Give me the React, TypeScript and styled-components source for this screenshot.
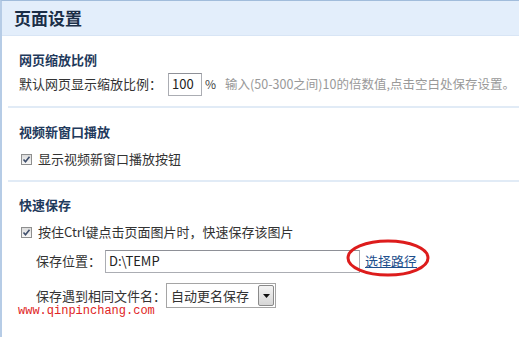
import React from "react";
import styled, { createGlobalStyle } from "styled-components";

const Global = createGlobalStyle`
  html, body { margin: 0; padding: 0; background: #ffffff; }
  body {
    font-family: "Noto Sans CJK SC", "Microsoft YaHei", sans-serif;
    font-size: 13px;
    color: #333333;
  }
`;

const Page = styled.div`
  width: 519px;
  height: 337px;
  box-sizing: border-box;
  border-left: 2px solid #b6cce6;
  border-top: 1px solid #a1bcdb;
  overflow: hidden;
  position: relative;
`;

const Header = styled.div`
  height: 35px;
  box-sizing: border-box;
  background: #e3eefb;
  border-bottom: 1px solid #d8e5f5;
  padding-left: 12px;
  display: flex;
  align-items: center;
`;

const Title = styled.h1`
  margin: 0;
  font-size: 17px;
  font-weight: 700;
  color: #1b2e47;
  line-height: 20px;
`;

const Section = styled.section<{ $top: number; $bottom: number; $last?: boolean }>`
  margin-left: 6px;
  padding: ${(p) => p.$top}px 0 ${(p) => p.$bottom}px 11px;
  border-bottom: ${(p) => (p.$last ? "none" : "2px solid #e1ebf6")};
  display: flex;
  flex-direction: column;
`;

const SectionTitle = styled.h2`
  margin: 0;
  font-size: 13px;
  font-weight: 700;
  color: #1f3a5c;
  line-height: 20px;
`;

const Row = styled.div<{ $gap: number; $indent?: number; $h?: number }>`
  display: flex;
  align-items: center;
  margin-top: ${(p) => p.$gap}px;
  padding-left: ${(p) => p.$indent ?? 0}px;
  height: ${(p) => p.$h ?? 20}px;
  line-height: 20px;
  white-space: nowrap;
  & > * { flex-shrink: 0; }
`;

const Label = styled.span`
  color: #333333;
`;

const TextBox = styled.div<{ $w: number; $ml: number }>`
  width: ${(p) => p.$w}px;
  height: 23px;
  margin-left: ${(p) => p.$ml}px;
  box-sizing: border-box;
  border: 1px solid #abadb3;
  border-top-color: #8e9097;
  background: #fff;
  padding-left: 3px;
  display: flex;
  align-items: center;
  font-size: 13px;
  color: #222;
`;

const Unit = styled.span`
  margin-left: 3px;
  font-size: 12px;
  color: #444;
`;

const Hint = styled.span`
  margin-left: 9px;
  font-size: 12.5px;
  color: #999999;
`;

const CheckBox = styled.span`
  display: inline-flex;
  width: 11px;
  height: 11px;
  box-sizing: border-box;
  border: 1px solid #8e8f8f;
  background: linear-gradient(#dcdcdc, #f8f8f8);
  margin-left: 2px;
  margin-right: 6px;
  align-items: center;
  justify-content: center;
`;

const LinkWrap = styled.span`
  position: relative;
  margin-left: 5px;
`;

const Link = styled.a`
  color: #1d4f8c;
  text-decoration: underline;
  cursor: pointer;
`;

const Circle = styled.svg`
  position: absolute;
  left: -19px;
  top: -12px;
  pointer-events: none;
`;

const Select = styled.div`
  width: 110px;
  height: 25px;
  box-sizing: border-box;
  border: 1px solid #a5a5a5;
  background: #fff;
  display: flex;
  align-items: center;
  justify-content: space-between;
  padding-left: 4px;
  padding-right: 1px;
`;

const Arrow = styled.span`
  width: 16px;
  height: 21px;
  box-sizing: border-box;
  border: 1px solid #8a8a8a;
  border-radius: 2px;
  background: linear-gradient(#f4f4f4, #d6d6d6);
  display: flex;
  align-items: center;
  justify-content: center;
`;

const Watermark = styled.div`
  margin-left: 16px;
  margin-top: -3px;
  font-family: "Liberation Mono", monospace;
  font-size: 12px;
  line-height: 12px;
  color: #e02424;
`;

function Check() {
  return (
    <CheckBox>
      <svg width="9" height="9" viewBox="0 0 9 9">
        <path d="M1.5 4.5 L3.5 6.8 L7.5 1.8" fill="none" stroke="#3f4f6c" strokeWidth="1.6" />
      </svg>
    </CheckBox>
  );
}

export default function App() {
  return (
    <>
      <Global />
      <Page>
        <Header>
          <Title>页面设置</Title>
        </Header>

        <Section $top={14} $bottom={10}>
          <SectionTitle>网页缩放比例</SectionTitle>
          <Row $gap={2} $h={24}>
            <Label>默认网页显示缩放比例：</Label>
            <TextBox $w={34} $ml={6}>100</TextBox>
            <Unit>%</Unit>
            <Hint>输入(50-300之间)10的倍数值,点击空白处保存设置。</Hint>
          </Row>
        </Section>

        <Section $top={14} $bottom={11}>
          <SectionTitle>视频新窗口播放</SectionTitle>
          <Row $gap={7}>
            <Check />
            <Label>显示视频新窗口播放按钮</Label>
          </Row>
        </Section>

        <Section $top={13} $bottom={0} $last>
          <SectionTitle>快速保存</SectionTitle>
          <Row $gap={7}>
            <Check />
            <Label>按住Ctrl键点击页面图片时，快速保存该图片</Label>
          </Row>
          <Row $gap={7} $indent={17} $h={24}>
            <Label>保存位置：</Label>
            <TextBox $w={255} $ml={4}>D:\TEMP</TextBox>
            <LinkWrap>
              <Link>选择路径</Link>
              <Circle width="86" height="40" viewBox="0 0 86 40">
                <ellipse cx="42" cy="19" rx="40" ry="17" fill="none" stroke="#dd1c1c" strokeWidth="3" />
              </Circle>
            </LinkWrap>
          </Row>
          <Row $gap={10} $indent={17} $h={25}>
            <Label>保存遇到相同文件名：</Label>
            <Select>
              <span>自动更名保存</span>
              <Arrow>
                <svg width="7" height="4" viewBox="0 0 7 4">
                  <path d="M0 0 L7 0 L3.5 4 Z" fill="#111" />
                </svg>
              </Arrow>
            </Select>
          </Row>
        </Section>
        <Watermark>www.qinpinchang.com</Watermark>
      </Page>
    </>
  );
}
